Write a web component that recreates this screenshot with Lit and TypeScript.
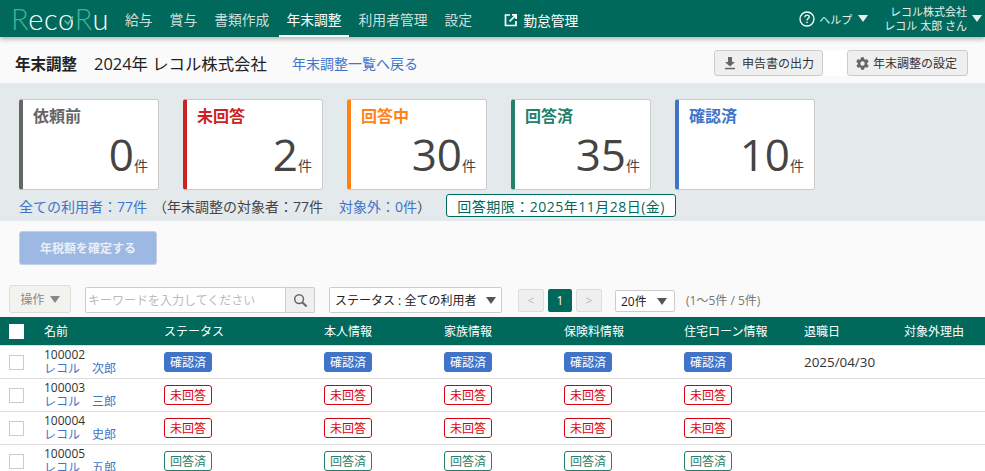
import {LitElement, css, html, svg} from 'lit';
import {customElement} from 'lit/decorators.js';

type Status = 'done' | 'none' | 'answered';

const statusLabel: Record<Status, string> = {
    done: '確認済',
    none: '未回答',
    answered: '回答済',
};

const navItems = ['給与', '賞与', '書類作成', '年末調整', '利用者管理', '設定'];

const cards = [
    {label: '依頼前', count: 0, tone: 'gray'},
    {label: '未回答', count: 2, tone: 'red'},
    {label: '回答中', count: 30, tone: 'orange'},
    {label: '回答済', count: 35, tone: 'green'},
    {label: '確認済', count: 10, tone: 'blue'},
];

const rows: {id: string; name: string; status: Status; retired: string}[] = [
    {id: '100002', name: 'レコル　次郎', status: 'done', retired: '2025/04/30'},
    {id: '100003', name: 'レコル　三郎', status: 'none', retired: ''},
    {id: '100004', name: 'レコル　史郎', status: 'none', retired: ''},
    {id: '100005', name: 'レコル　五郎', status: 'answered', retired: ''},
];

const columns = ['名前', 'ステータス', '本人情報', '家族情報', '保険料情報', '住宅ローン情報', '退職日', '対象外理由'];

const gearPath = svg`<path fill-rule="evenodd" d="M19.4 13a7.6 7.6 0 0 0 0-2l2.1-1.6a.5.5 0 0 0 .1-.6l-2-3.5a.5.5 0 0 0-.6-.2l-2.5 1a7.3 7.3 0 0 0-1.7-1l-.4-2.7a.5.5 0 0 0-.5-.4h-4a.5.5 0 0 0-.5.4l-.4 2.7a7.3 7.3 0 0 0-1.7 1l-2.5-1a.5.5 0 0 0-.6.2l-2 3.500a.5.5 0 0 0 .1.6L4.6 11a7.6 7.6 0 0 0 0 2l-2.100 1.600a.5.5 0 0 0-.1.6l2 3.500c.1.2.4.3.6.2l2.500-1c.5.4 1.100.7 1.700 1l.4 2.700c0 .2.2.4.5.4h4c.3 0 .5-.2.5-.4l.4-2.700a7.3 7.3 0 0 0 1.700-1l2.500 1c.2.1.5 0 .6-.2l2-3.500a.5.5 0 0 0-.1-.6L19.4 13zM12 15.500a3.500 3.500 0 1 1 0-7 3.500 3.500 0 0 1 0 7z"/>`;

@customElement('app-root')
class AppRoot extends LitElement {

    renderHeader() {
        return html`
        <header class="topbar">
            <div class="logo"><span class="accent">R</span>ec<span class="logo-o">o<svg class="logo-check" viewBox="0 0 12 12" width="12" height="12"><path d="M2.500 5.500 6 9l5-7.500" fill="none" stroke="#4fc0a4" stroke-width="1.500"/></svg></span><span class="accent">R</span>u</div>
            <nav class="nav">
                ${navItems.map(item => html`<a class="nav-item ${item === '年末調整' ? 'active' : ''}">${item}</a>`)}
            </nav>
            <a class="external">
                <svg viewBox="0 0 14 14" width="14" height="14"><path d="M6 2H1.500v10.500H12V8" fill="none" stroke="#fff" stroke-width="1.700"/><path d="M8 1h5v5h-1.800V4L6.200 9 5 7.800l5-5H8z" fill="#fff"/></svg>
                勤怠管理
            </a>
            <div class="help">
                <svg viewBox="0 0 16 16" width="16" height="16"><circle cx="8" cy="8" r="7" fill="none" stroke="#fff" stroke-width="1.300"/><path d="M5.800 6.200c0-1.300 1-2.100 2.200-2.100s2.200.8 2.200 1.900c0 1.600-2.200 1.600-2.200 3.400" fill="none" stroke="#fff" stroke-width="1.300"/><rect x="7.300" y="10.700" width="1.400" height="1.400" fill="#fff"/></svg>
                <span>ヘルプ</span>
                <i class="caret light"></i>
            </div>
            <div class="user">
                <div class="user-text"><div>レコル株式会社</div><div>レコル 太郎 さん</div></div>
                <i class="caret light"></i>
            </div>
        </header>`;
    }

    renderTitle() {
        return html`
        <section class="title-bar">
            <h1>年末調整</h1>
            <span class="title-company">2024年 レコル株式会社</span>
            <a class="back-link">年末調整一覧へ戻る</a>
            <div class="title-actions">
                <button class="plain-btn export">
                    <svg viewBox="0 0 14 14" width="14" height="14"><path d="M5 1h4v5h3L7 10.500 2 6h3z" fill="#666"/><rect x="2" y="11.800" width="10" height="1.500" fill="#666"/></svg>
                    申告書の出力
                </button>
                <button class="plain-btn settings">
                    <svg viewBox="0 0 24 24" width="15" height="15" fill="#666">${gearPath}</svg>
                    年末調整の設定
                </button>
            </div>
        </section>`;
    }

    renderSummary() {
        return html`
        <section class="summary">
            <div class="cards">
                ${cards.map(card => html`
                <div class="card ${card.tone}">
                    <div class="card-label">${card.label}</div>
                    <div class="card-count"><span class="num">${card.count}</span><span class="unit">件</span></div>
                </div>`)}
            </div>
            <div class="summary-line">
                <a class="all">全ての利用者：77件</a>
                <span class="target">（年末調整の対象者：77件</span>
                <span class="excluded"><a>対象外：0件</a>）</span>
                <span class="deadline">回答期限：2025年11月28日(金)</span>
            </div>
        </section>`;
    }

    renderToolbar() {
        return html`
        <div class="toolbar">
            <button class="op-btn">操作 <i class="caret muted"></i></button>
            <div class="search">
                <input type="text" placeholder="キーワードを入力してください" />
                <button class="search-btn" aria-label="検索">
                    <svg viewBox="0 0 16 16" width="15" height="15"><circle cx="6.500" cy="6.500" r="4.700" fill="none" stroke="#666" stroke-width="1.600"/><path d="M10 10l4.500 4.500" stroke="#666" stroke-width="2.200"/></svg>
                </button>
            </div>
            <div class="select status-select">ステータス : 全ての利用者<i class="caret dark"></i></div>
            <div class="pager">
                <span class="page-btn off">&lt;</span>
                <span class="page-btn current">1</span>
                <span class="page-btn off">&gt;</span>
            </div>
            <div class="select size-select">20件<i class="caret dark"></i></div>
            <span class="range">(1〜5件 / 5件)</span>
        </div>`;
    }

    renderTable() {
        return html`
        <div class="table">
            <div class="tr head">
                <div class="cell check"><span class="box white"></span></div>
                ${columns.map(col => html`<div class="cell">${col}</div>`)}
            </div>
            ${rows.map(row => html`
            <div class="tr">
                <div class="cell check"><span class="box"></span></div>
                <div class="cell name"><div>${row.id}</div><a>${row.name}</a></div>
                ${[0, 1, 2, 3, 4].map(() => html`<div class="cell"><span class="badge ${row.status}">${statusLabel[row.status]}</span></div>`)}
                <div class="cell date">${row.retired}</div>
                <div class="cell"></div>
            </div>`)}
        </div>`;
    }

    render() {
        return html`
        ${this.renderHeader()}
        ${this.renderTitle()}
        ${this.renderSummary()}
        <div class="confirm-wrap"><button class="confirm">年税額を確定する</button></div>
        ${this.renderToolbar()}
        ${this.renderTable()}
        `;
    }

    static styles = css`
        :host {
            display: block;
            height: 471px;
            overflow: hidden;
            background: #fafafa;
            color: #333;
            font-family: "Open Sans", "Noto Sans CJK JP", sans-serif;
            font-size: 12px;
        }

        * {
            box-sizing: border-box;
        }

        a {
            color: #3f74c8;
        }

        button {
            font-family: inherit;
        }

        .topbar {
            position: relative;
            z-index: 1;
            display: flex;
            align-items: stretch;
            height: 37px;
            padding-left: 11px;
            background: #00695c;
            color: #fff;
            box-shadow: 0 2px 5px rgba(0, 0, 0, 0.3);
        }

        .logo {
            width: 107px;
            font-family: "Lato", sans-serif;
            font-weight: 300;
            font-size: 29px;
            letter-spacing: 0.6px;
            line-height: 37px;
            white-space: nowrap;
        }

        .accent {
            color: #3fb39a;
        }

        .logo-o {
            position: relative;
        }

        .logo-check {
            position: absolute;
            left: 4px;
            top: 14px;
        }

        .nav {
            display: flex;
            gap: 3px;
        }

        .nav-item {
            padding: 0 7px;
            line-height: 40px;
            height: 37px;
            font-size: 13.800px;
            color: #cfdfdb;
        }

        .nav-item.active {
            color: #fff;
            border-bottom: 2px solid #fff;
        }

        .external {
            display: flex;
            align-items: center;
            gap: 5px;
            margin-left: 25px;
            padding-top: 2px;
            color: #fff;
            font-size: 13.800px;
        }

        .help {
            display: flex;
            align-items: center;
            gap: 4px;
            margin-left: auto;
            color: #e6efed;
            font-size: 11px;
        }

        .user {
            display: flex;
            align-items: center;
            gap: 5px;
            margin-left: 16px;
            padding-right: 3px;
            color: #e6efed;
            font-size: 11px;
        }

        .user-text {
            text-align: right;
            line-height: 14px;
        }

        .caret {
            display: inline-block;
            width: 0;
            height: 0;
            border-left: 5px solid transparent;
            border-right: 5px solid transparent;
            border-top: 7px solid #666;
        }

        .caret.light {
            border-top-color: #e6efed;
        }

        .help .caret {
            margin-left: 2px;
        }

        .caret.muted {
            border-top-color: #888;
        }

        .caret.dark {
            border-top-color: #555;
        }

        .title-bar {
            display: flex;
            align-items: center;
            height: 46px;
            padding: 6px 17px 0 15px;
            background: #fafafa;
            color: #222;
        }

        h1 {
            margin: 0;
            font-size: 15.500px;
            font-weight: 700;
        }

        .title-company {
            margin-left: 17px;
            font-size: 16.400px;
        }

        .back-link {
            margin-left: 25px;
            font-size: 14px;
        }

        .title-actions {
            display: flex;
            gap: 24px;
            margin-left: auto;
            background: #fff;
        }

        .plain-btn {
            display: flex;
            align-items: center;
            justify-content: center;
            gap: 5px;
            height: 26px;
            padding: 0;
            border: 1px solid #ccc;
            border-radius: 3px;
            background: #efefef;
            color: #333;
            font-size: 12px;
        }

        .export {
            width: 109px;
        }

        .settings {
            width: 121px;
            gap: 3px;
            justify-content: flex-start;
            padding-left: 7px;
        }

        .summary {
            height: 138px;
            padding: 16px 19px 0;
            background: #e4e9ec;
        }

        .cards {
            display: flex;
            gap: 24px;
        }

        .card {
            width: 140px;
            height: 91px;
            padding: 6px 10px 0 10px;
            border: 1px solid #ccc;
            border-left: 4px solid;
            border-radius: 3px;
            background: #fff;
        }

        .card-label {
            font-size: 16px;
            font-weight: 700;
            line-height: 21px;
        }

        .card-count {
            display: flex;
            align-items: baseline;
            justify-content: flex-end;
            color: #444;
        }

        .num {
            font-size: 44px;
            line-height: 54px;
        }

        .unit {
            font-size: 14px;
        }

        .gray { border-left-color: #666; }
        .gray .card-label { color: #666; }
        .red { border-left-color: #cc2222; }
        .red .card-label { color: #cc2222; }
        .orange { border-left-color: #ff8214; }
        .orange .card-label { color: #ff8214; }
        .green { border-left-color: #24806a; }
        .green .card-label { color: #24806a; }
        .blue { border-left-color: #3f74c8; }
        .blue .card-label { color: #3f74c8; }

        .summary-line {
            display: flex;
            align-items: center;
            height: 23px;
            margin-top: 4px;
            font-size: 14px;
            color: #444;
            white-space: nowrap;
        }

        .target {
            margin-left: 6px;
        }

        .excluded {
            margin-left: 16px;
        }

        .deadline {
            display: flex;
            align-items: center;
            height: 23px;
            margin-left: auto;
            margin-right: 290px;
            padding: 0 10px;
            border: 1px solid #00695c;
            border-radius: 3px;
            background: #fff;
            color: #00695c;
            letter-spacing: 0.5px;
        }

        .confirm-wrap {
            height: 64px;
            padding: 10px 19px 0;
        }

        .confirm {
            width: 138px;
            height: 34px;
            border: 1px solid #c3cfe0;
            border-radius: 3px;
            background: #9db8e2;
            color: #e9eff8;
            font-size: 12px;
            font-weight: 700;
        }

        .toolbar {
            display: flex;
            align-items: flex-end;
            height: 32px;
            padding: 0 0 4px 9px;
        }

        .op-btn {
            display: flex;
            align-items: center;
            justify-content: center;
            gap: 5px;
            width: 62px;
            height: 28px;
            padding: 0;
            border: 1px solid #ddd;
            border-radius: 3px;
            background: #f2f2ee;
            color: #888;
            font-size: 12px;
        }

        .search {
            display: flex;
            height: 26px;
            margin-left: 14px;
        }

        .search input {
            width: 201px;
            height: 26px;
            padding: 0 2px;
            border: 1px solid #ccc;
            border-radius: 2px 0 0 2px;
            background: #fff;
            font-family: inherit;
            font-size: 12px;
            outline: none;
        }

        .search input::placeholder {
            color: #bbb;
        }

        .search-btn {
            display: flex;
            align-items: center;
            justify-content: center;
            width: 29px;
            height: 26px;
            padding: 0;
            border: 1px solid #ccc;
            border-left: none;
            border-radius: 0 2px 2px 0;
            background: #efefef;
        }

        .select {
            display: flex;
            align-items: center;
            justify-content: space-between;
            border: 1px solid #ccc;
            border-radius: 2px;
            background: #fff;
            color: #222;
            white-space: nowrap;
        }

        .status-select {
            width: 173px;
            height: 26px;
            margin-left: 14px;
            padding: 0 0 0 5px;
            font-size: 12px;
            overflow: hidden;
        }

        .status-select .caret {
            flex: none;
            margin-right: 5px;
        }

        .pager {
            display: flex;
            gap: 4px;
            margin-left: 16px;
            margin-bottom: 1px;
        }

        .page-btn {
            display: flex;
            align-items: center;
            justify-content: center;
            width: 26px;
            height: 23px;
            border-radius: 2px;
            font-size: 12px;
        }

        .page-btn.off {
            border: 1px solid #ddd;
            background: #efefef;
            color: #bbb;
        }

        .page-btn.current {
            width: 24px;
            background: #00695c;
            color: #fff;
        }

        .size-select {
            width: 60px;
            height: 22px;
            margin-left: 13px;
            margin-bottom: 1px;
            padding: 0 7px 0 5px;
            font-size: 12px;
        }

        .range {
            margin-left: 11px;
            margin-bottom: 4px;
            color: #777;
            font-size: 12px;
        }

        .table {
            background: #fff;
        }

        .tr {
            display: grid;
            grid-template-columns: 44px 120px 160px 120px 120px 120px 120px 100px 81px;
            align-items: center;
            height: 33px;
            border-bottom: 1px solid #ddd;
            color: #333;
            font-size: 12px;
        }

        .tr.head {
            height: 29px;
            border-bottom: 1px solid #ddd;
            background: #00695c;
            color: #fff;
            white-space: nowrap;
        }

        .check {
            padding-left: 9px;
        }

        .box {
            display: block;
            width: 15px;
            height: 15px;
            border: 1px solid #ccc;
            background: #fff;
        }

        .box.white {
            border-color: #fff;
        }

        .name {
            line-height: 14px;
            font-size: 12px;
            white-space: nowrap;
        }

        .name a {
            display: block;
        }

        .date {
            font-size: 13.400px;
        }

        .badge {
            display: inline-flex;
            align-items: center;
            justify-content: center;
            width: 48px;
            height: 20px;
            border: 1px solid;
            border-radius: 3px;
            font-size: 12px;
        }

        .badge.done {
            border-color: #3f74c8;
            background: #3f74c8;
            color: #fff;
        }

        .badge.none {
            border-color: #d8000c;
            color: #d8000c;
        }

        .badge.answered {
            border-color: #24806a;
            color: #24806a;
        }
    `;
}
